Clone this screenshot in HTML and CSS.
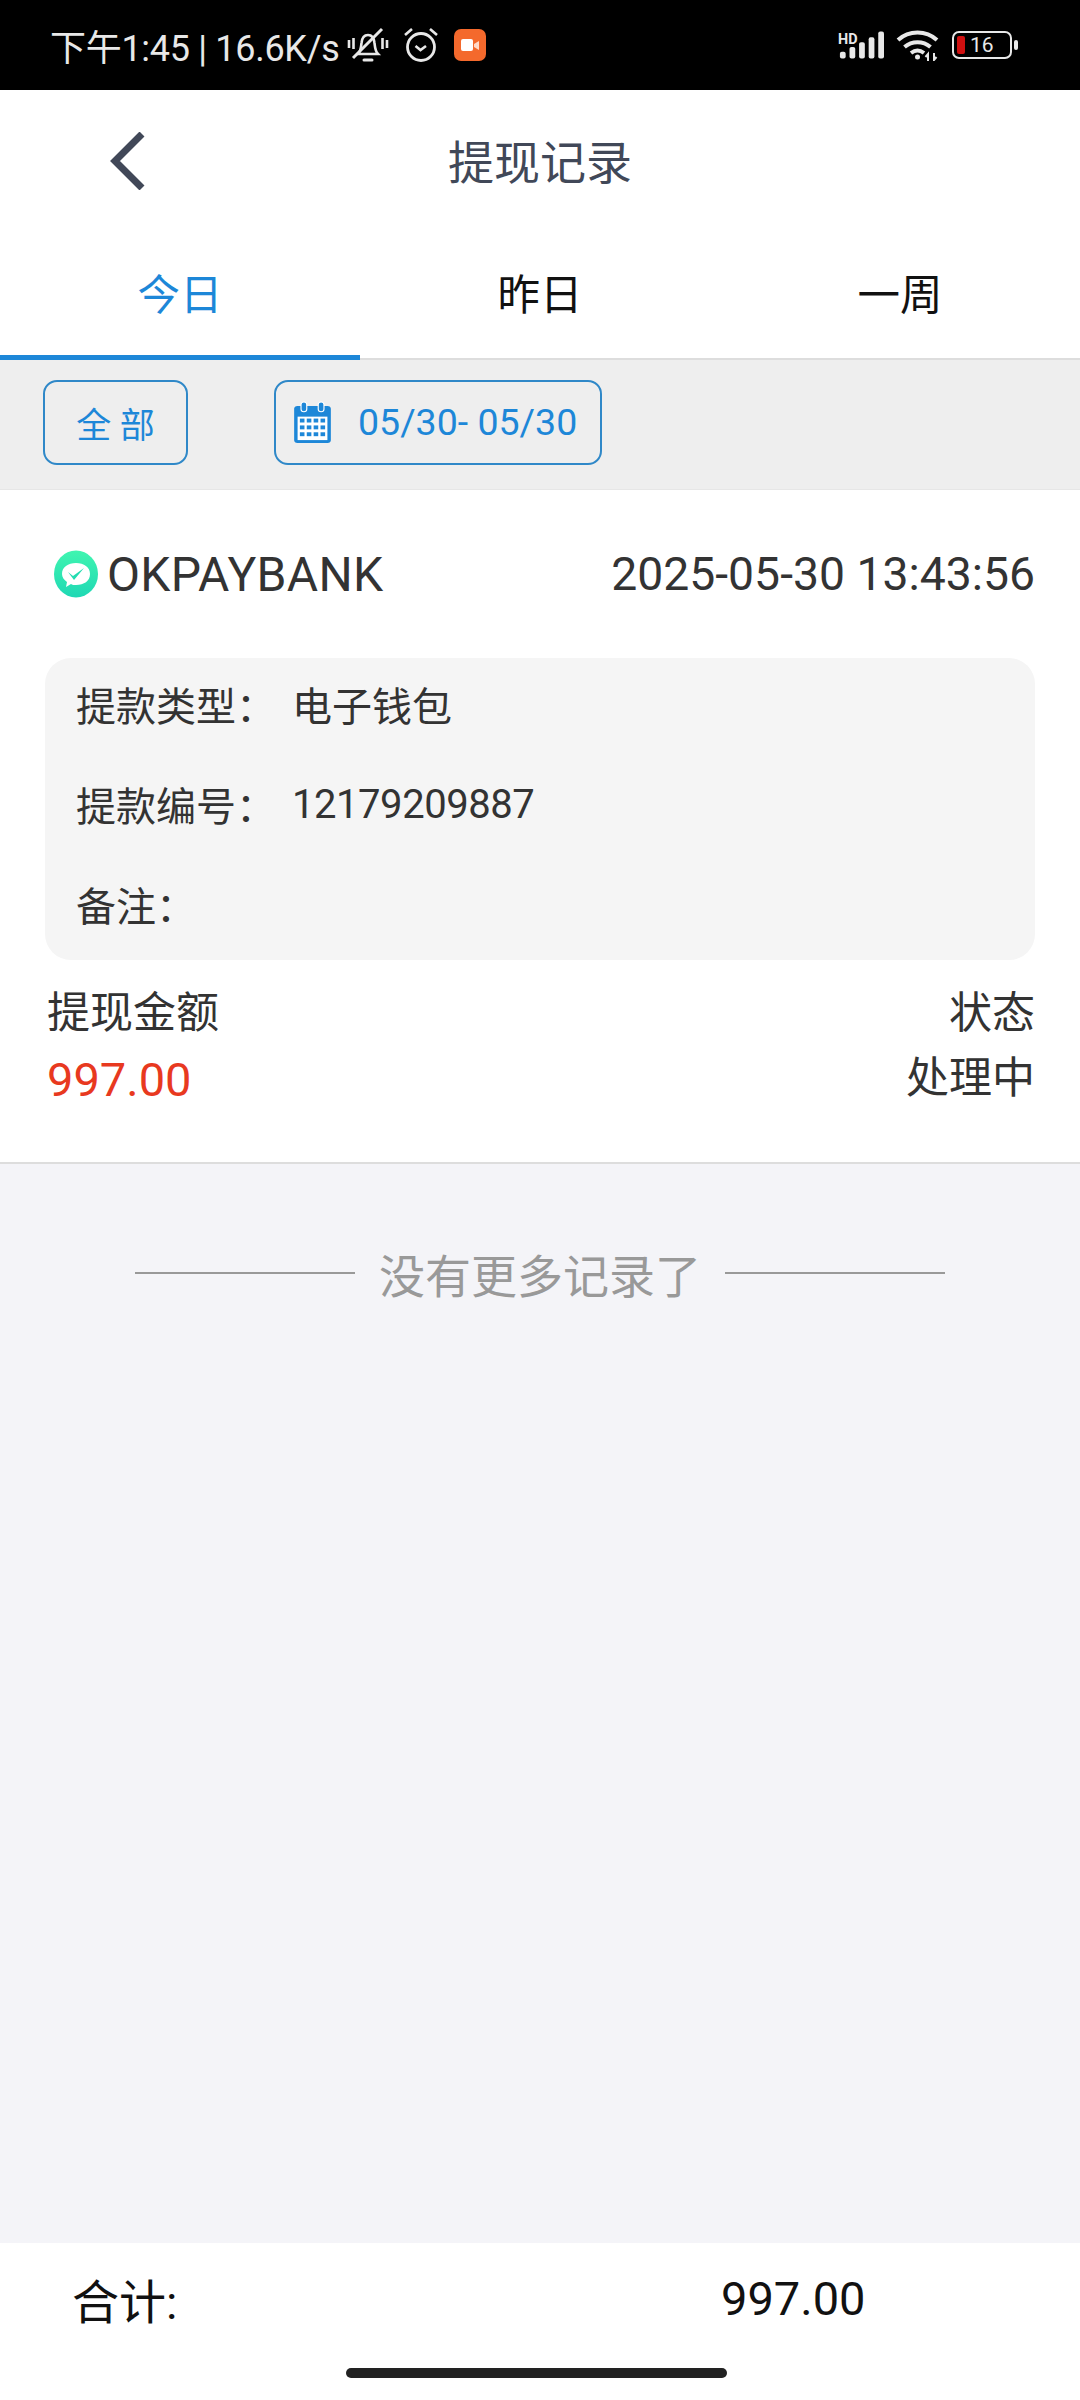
FILE: index.html
```html
<!DOCTYPE html>
<html lang="zh-CN">
<head>
    <meta charset="UTF-8">
    <meta name="viewport" content="width=device-width, initial-scale=1.0">
    <title>提现记录</title>
    <link rel="stylesheet" href="styles.css">
</head>
<body>
    <div class="page">
        <div class="status-bar">
            <div class="status-left">
                <span class="status-text">下午1:45 | 16.6K/s</span>
                <svg class="ic-bell" viewBox="0 0 42 36" width="42" height="36" fill="none" stroke="#e8e8e8" stroke-width="2.6">
                    <path d="M2 13v8M6.5 11v11M35.5 11v11M40 13v8" />
                    <path d="M11 27c3-3 3-7 3.500-11 .5-5 3-8 6.500-8s6 3 6.500 8c.5 4 .5 8 3.500 11z" />
                    <path d="M17 33h8" stroke-width="3" stroke-linecap="round" />
                    <path d="M6 31L35 2" stroke-width="3" />
                </svg>
                <svg class="ic-alarm" viewBox="0 0 36 36" width="36" height="36" fill="none" stroke="#e8e8e8" stroke-width="2.8">
                    <circle cx="18" cy="20" r="13.500" />
                    <path d="M12.500 19l5 4 5.500-4" stroke-width="2.600" />
                    <path d="M2 8l7-6M34 8l-7-6" stroke-width="2.600" />
                </svg>
                <svg class="ic-rec" viewBox="0 0 32 32" width="32" height="32">
                    <rect width="32" height="32" rx="7" fill="#f4692c" />
                    <rect x="7" y="10" width="12" height="12" rx="2" fill="#fff" />
                    <path d="M20 15l5-3v9l-5-3z" fill="#ffd9c8" />
                </svg>
            </div>
            <div class="status-right">
                <svg viewBox="0 0 48 32" width="46" height="32" fill="#e8e8e8">
                    <text x="0" y="14.5" class="hd">HD</text>
                    <rect x="2" y="23" width="6" height="7" rx="2" />
                    <rect x="12" y="18" width="6" height="12" rx="2" />
                    <rect x="22" y="13" width="6" height="17" rx="2" />
                    <rect x="32" y="8" width="6" height="22" rx="2" />
                    <rect x="42" y="2" width="6" height="28" rx="2" />
                </svg>
                <svg viewBox="0 0 44 32" width="44" height="32" fill="none" stroke="#e8e8e8" stroke-width="4">
                    <path d="M2 11c11-10 28-10 39 0" />
                    <path d="M8.500 18c7.500-6.500 18.500-6.500 26 0" />
                    <path d="M15 24c4-3 9-3 13 0" />
                    <circle cx="21.500" cy="28" r="2.500" fill="#e8e8e8" stroke="none" />
                    <path d="M32 32v-7l-2.500 3M38 24v7l2.500-3" stroke-width="2" />
                </svg>
                <div class="battery">
                    <div class="battery-body">
                        <span class="battery-fill"></span>
                        <span class="battery-num">16</span>
                    </div>
                    <span class="battery-cap"></span>
                </div>
            </div>
        </div>

        <div class="header">
            <svg class="back" viewBox="0 0 36 58" width="36" height="58" fill="none" stroke="#414858" stroke-width="7">
                <path d="M32 2L5 29l27 27" />
            </svg>
            <h1>提现记录</h1>
        </div>

        <div class="tabs">
            <div class="tab active">今日</div>
            <div class="tab">昨日</div>
            <div class="tab">一周</div>
        </div>

        <div class="filters">
            <div class="btn btn-all">全 部</div>
            <div class="btn btn-date">
                <svg viewBox="0 0 34 44" width="39" height="43" preserveAspectRatio="none">
                    <rect x="1" y="5" width="32" height="38" rx="3" fill="#1d87d8" />
                    <rect x="4" y="16" width="26" height="24" fill="#fff" />
                    <rect x="7" y="1" width="5" height="10" rx="2.500" fill="#1d87d8" stroke="#fff" stroke-width="1" />
                    <rect x="22" y="1" width="5" height="10" rx="2.500" fill="#1d87d8" stroke="#fff" stroke-width="1" />
                    <g fill="#1d87d8">
                        <rect x="6" y="18" width="4" height="4" /><rect x="12" y="18" width="4" height="4" /><rect x="18" y="18" width="4" height="4" /><rect x="24" y="18" width="4" height="4" />
                        <rect x="6" y="25" width="4" height="4" /><rect x="12" y="25" width="4" height="4" /><rect x="18" y="25" width="4" height="4" /><rect x="24" y="25" width="4" height="4" />
                        <rect x="6" y="32" width="4" height="4" /><rect x="12" y="32" width="4" height="4" /><rect x="18" y="32" width="4" height="4" /><rect x="24" y="32" width="4" height="4" />
                    </g>
                </svg>
                <span>05/30- 05/30</span>
            </div>
        </div>

        <div class="card">
            <div class="card-top">
                <div class="brand">
                    <svg viewBox="0 0 44 48" width="46" height="48">
                        <defs>
                            <linearGradient id="okpay" x1="0" y1="0" x2="0" y2="1">
                                <stop offset="0" stop-color="#40f5b0" />
                                <stop offset="1" stop-color="#1fd8b4" />
                            </linearGradient>
                        </defs>
                        <ellipse cx="22" cy="24" rx="22" ry="23.500" fill="url(#okpay)" />
                        <path d="M8 24c0-7 6-11 14-11s14 4 14 11-6 11-14 11c-2 0-4 0-5-1l-5 3 1-5c-3-2-5-5-5-8z" fill="#fff" />
                        <path d="M14 22l5 4 11-8-10 12z" fill="#22dcb0" />
                    </svg>
                    <span>OKPAYBANK</span>
                </div>
                <div class="date">2025-05-30 13:43:56</div>
            </div>

            <div class="info">
                <div class="info-row"><span class="info-label">提款类型：</span><span>电子钱包</span></div>
                <div class="info-row"><span class="info-label">提款编号：</span><span class="info-num">12179209887</span></div>
                <div class="info-row"><span class="info-label">备注：</span><span></span></div>
            </div>

            <div class="amount-row">
                <div>
                    <div class="amount-label">提现金额</div>
                    <div class="amount-val">997.00</div>
                </div>
                <div class="status-col">
                    <div class="amount-label">状态</div>
                    <div class="amount-label">处理中</div>
                </div>
            </div>
        </div>

        <div class="list-bg">
            <div class="no-more">
                <span class="line"></span>
                <span>没有更多记录了</span>
                <span class="line"></span>
            </div>
        </div>

        <div class="footer">
            <div class="total">
                <span>合计:</span>
                <span class="total-num">997.00</span>
            </div>
            <div class="home-bar"></div>
        </div>
    </div>
</body>
</html>
```

FILE: styles.css
```css
* {
    box-sizing: border-box;
}
body {
    margin: 0;
    font-family: "Roboto", "Noto Sans CJK SC", sans-serif;
    color: #333;
    background: #f4f4f8;
}
.page {
    width: 1080px;
    height: 2400px;
    display: flex;
    flex-direction: column;
}

/* status bar */
.status-bar {
    height: 90px;
    background: #000;
    color: #e8e8e8;
    display: flex;
    justify-content: space-between;
    align-items: center;
    padding: 0 62px 0 50px;
}
.status-left {
    display: flex;
    align-items: center;
}
.status-text {
    font-size: 36px;
    letter-spacing: -0.3px;
    white-space: nowrap;
}
.ic-bell {
    margin-left: 8px;
}
.ic-alarm {
    margin-left: 14px;
}
.ic-rec {
    margin-left: 15px;
}
.status-right {
    display: flex;
    align-items: center;
    gap: 12px;
}
.hd {
    font-family: "Roboto", sans-serif;
    font-size: 15px;
    font-weight: 700;
}
.battery {
    display: flex;
    align-items: center;
    gap: 2px;
}
.battery-body {
    width: 60px;
    height: 28px;
    border: 2.500px solid #e8e8e8;
    border-radius: 7px;
    display: flex;
    align-items: center;
    padding-left: 3px;
    gap: 5px;
}
.battery-fill {
    width: 8px;
    height: 18px;
    background: #d01010;
    border-radius: 2px;
}
.battery-num {
    font-size: 21px;
    line-height: 1;
}
.battery-cap {
    width: 4px;
    height: 10px;
    background: #e8e8e8;
    border-radius: 2px;
}

/* header */
.header {
    height: 145px;
    background: #fff;
    display: flex;
    align-items: center;
    justify-content: center;
    position: relative;
    padding-bottom: 8px;
}
.back {
    position: absolute;
    left: 110px;
    top: 42px;
}
.header h1 {
    margin: 0;
    font-size: 46px;
    font-weight: 400;
    color: #414858;
}

/* tabs */
.tabs {
    height: 125px;
    background: #fff;
    display: flex;
    border-bottom: 2px solid #ddd;
}
.tab {
    flex: 1;
    display: flex;
    align-items: center;
    justify-content: center;
    font-size: 42.500px;
    color: #111;
    padding-bottom: 12px;
    margin-bottom: -2px;
}
.tab.active {
    color: #1d87d8;
    border-bottom: 5px solid #1d87d8;
    padding-bottom: 7px;
}

/* filter bar */
.filters {
    height: 130px;
    background: #eee;
    border-bottom: 1px solid #e6e6e6;
    display: flex;
    align-items: center;
    padding: 0 0 5px 43px;
    gap: 86px;
}
.btn {
    height: 85px;
    border: 2px solid #2f88c8;
    border-radius: 14px;
    color: #1d87d8;
    font-size: 35px;
    display: flex;
    align-items: center;
    justify-content: center;
}
.btn-all {
    width: 145px;
}
.btn-date {
    width: 328px;
    justify-content: flex-start;
    padding-left: 17px;
    gap: 26px;
    font-size: 37.500px;
}

/* record card */
.card {
    height: 674px;
    background: #fff;
    border-bottom: 2px solid #ddd;
    padding: 0 45px;
}
.card-top {
    height: 168px;
    display: flex;
    justify-content: space-between;
    align-items: center;
}
.brand {
    display: flex;
    align-items: center;
    font-size: 48px;
    letter-spacing: 0.3px;
    padding-left: 8px;
    gap: 8px;
}
.date {
    font-size: 46.300px;
}
.info {
    height: 302px;
    background: #f5f5f5;
    border-radius: 26px;
    padding: 0 31px;
    display: flex;
    flex-direction: column;
    font-size: 40px;
}
.info-row {
    height: 100px;
    padding-bottom: 8px;
    display: flex;
    align-items: center;
}
.info-label {
    width: 216px;
}
.info-num {
    letter-spacing: -0.45px;
}
.amount-row {
    display: flex;
    justify-content: space-between;
    padding: 21px 0 0 2px;
}
.amount-label {
    font-size: 43px;
    line-height: 65px;
}
.amount-val {
    font-size: 47px;
    line-height: 67px;
    color: #e8391f;
}
.status-col {
    text-align: right;
}

/* empty area */
.list-bg {
    flex: 1;
    background: #f4f4f8;
    padding-top: 76px;
}
.no-more {
    display: flex;
    align-items: center;
    justify-content: center;
    gap: 24px;
    font-size: 46px;
    color: #999;
}
.line {
    width: 220px;
    height: 2px;
    background: #999;
}

/* footer */
.footer {
    height: 157px;
    background: #fff;
    position: relative;
    color: #111;
}
.total {
    display: flex;
    align-items: center;
    height: 110px;
    font-size: 47px;
    padding-left: 72px;
}
.total span:first-child {
    width: 649px;
}
.home-bar {
    position: absolute;
    left: 346px;
    top: 125px;
    width: 381px;
    height: 10px;
    border-radius: 5px;
    background: #222;
}
```
